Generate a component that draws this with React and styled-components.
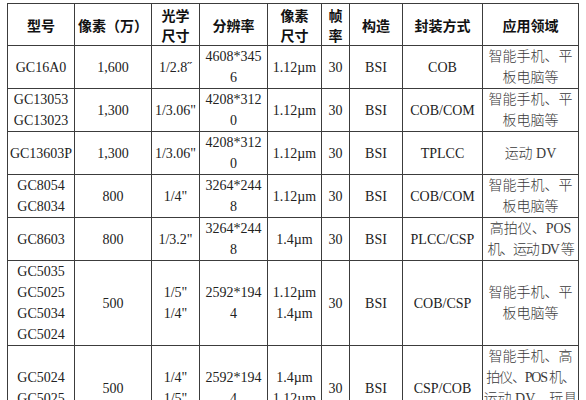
import React from "react";
import styled, { createGlobalStyle } from "styled-components";

const GlobalStyle = createGlobalStyle`
  html, body {
    margin: 0;
    padding: 0;
    background: #ffffff;
  }
`;

const widths = [67, 77, 48, 68, 54, 28, 53, 80, 96];

const headers = [
  ["型号"],
  ["像素（万）"],
  ["光学", "尺寸"],
  ["分辨率"],
  ["像素", "尺寸"],
  ["帧", "率"],
  ["构造"],
  ["封装方式"],
  ["应用领域"],
];

// lines wrapped in "~" are squeezed a little to fit the narrow column
const rows = [
  [["GC16A0"], ["1,600"], ["1/2.8˝"], ["4608*345", "6"], ["1.12µm"], ["30"], ["BSI"], ["COB"], ["智能手机、平", "板电脑等"]],
  [["GC13053", "GC13023"], ["1,300"], ["1/3.06\""], ["4208*312", "0"], ["1.12µm"], ["30"], ["BSI"], ["COB/COM"], ["智能手机、平", "板电脑等"]],
  [["GC13603P"], ["1,300"], ["1/3.06\""], ["4208*312", "0"], ["1.12µm"], ["30"], ["BSI"], ["TPLCC"], ["运动 DV"]],
  [["GC8054", "GC8034"], ["800"], ["1/4\""], ["3264*244", "8"], ["1.12µm"], ["30"], ["BSI"], ["COB/COM"], ["智能手机、平", "板电脑等"]],
  [["GC8603"], ["800"], ["1/3.2\""], ["3264*244", "8"], ["1.4µm"], ["30"], ["BSI"], ["PLCC/CSP"], ["高拍仪、POS", "~机、运动 DV 等"]],
  [["GC5035", "GC5025", "GC5034", "GC5024"], ["500"], ["1/5\"", "1/4\""], ["2592*194", "4"], ["1.12µm", "1.4µm"], ["30"], ["BSI"], ["COB/CSP"], ["智能手机、平", "板电脑等"]],
  [["GC5024", "GC5025"], ["500"], ["1/4\"", "1/5\""], ["2592*194", "4"], ["1.4µm", "1.12µm"], ["30"], ["BSI"], ["CSP/COB"], ["智能手机、高", "~拍仪、POS 机、", "运动 DV、玩具", "等"]],
];

const Page = styled.div`
  padding: 3px 0 0 7px;
`;

const Table = styled.table`
  border-collapse: collapse;
  table-layout: fixed;
  width: 571px;
  font-family: "Liberation Serif", "Noto Sans CJK SC", serif;
  font-size: 14px;
  color: #222;
`;

const HeadCell = styled.th`
  border: 1px solid #3c3c3c;
  height: 41px;
  padding: 0;
  line-height: 20px;
  text-align: center;
  vertical-align: middle;
  font-family: "Noto Sans CJK SC", sans-serif;
  font-weight: 700;
  font-size: 14px;
  color: #111;
  white-space: nowrap;
`;

const Cell = styled.td`
  border: 1px solid #3c3c3c;
  height: 42px;
  padding: 0;
  line-height: 21px;
  text-align: center;
  vertical-align: middle;
  white-space: nowrap;
  overflow: visible;
  color: ${(p) => (p.$cjk ? "#3a3a3a" : "#222")};
  font-weight: ${(p) => (p.$cjk ? 300 : 400)};
`;

const Line = styled.div`
  display: block;
  letter-spacing: ${(p) => (p.$tight ? "-1.2px" : "0")};
`;

function renderLine(t, k) {
  const tight = t.startsWith("~");
  return (
    <Line key={k} $tight={tight}>
      {tight ? t.slice(1) : t}
    </Line>
  );
}

export default function App() {
  return (
    <Page>
      <GlobalStyle />
      <Table>
        <colgroup>
          {widths.map((w, i) => (
            <col key={i} style={{ width: w }} />
          ))}
        </colgroup>
        <thead>
          <tr>
            {headers.map((h, i) => (
              <HeadCell key={i}>
                {h.map((t, j) => (
                  <Line key={j}>{t}</Line>
                ))}
              </HeadCell>
            ))}
          </tr>
        </thead>
        <tbody>
          {rows.map((r, i) => (
            <tr key={i}>
              {r.map((c, j) => (
                <Cell key={j} $cjk={j === 8}>
                  {c.map(renderLine)}
                </Cell>
              ))}
            </tr>
          ))}
        </tbody>
      </Table>
    </Page>
  );
}
